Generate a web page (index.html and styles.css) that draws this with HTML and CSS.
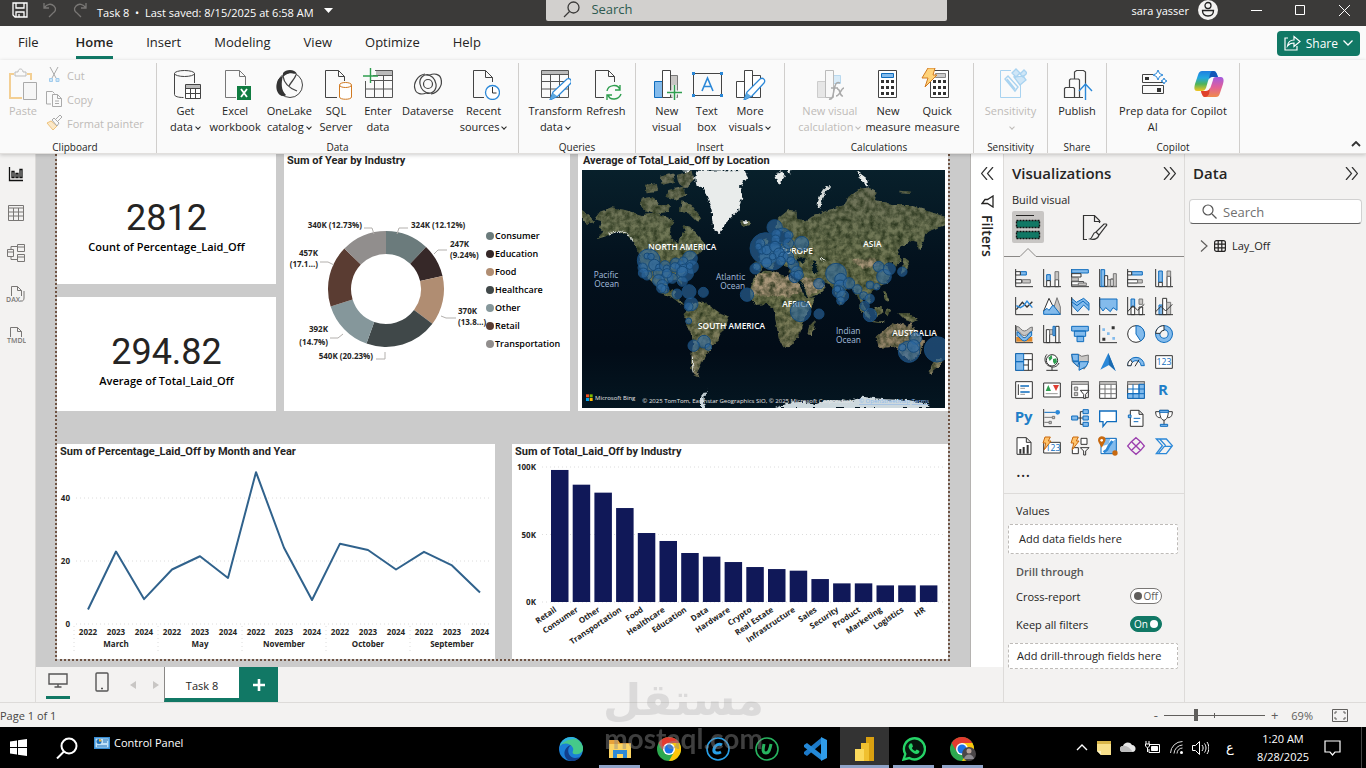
FILE: index.html
```html
<!DOCTYPE html>
<html lang="en">
<head>
  <meta charset="UTF-8" />
  <meta name="viewport" content="width=device-width, initial-scale=1.0"/>
  <title>Task 8</title>
  <link rel="stylesheet" href="styles.css">
</head>
<body>
  <header class="titlebar">
    <div class="title-left">
      <button class="plain" aria-label="Save"><svg width="16" height="16" viewBox="0 0 16 16" fill="none" stroke="#fff" stroke-width="1.3"><path d="M1 1h14v14H3l-2-2zM4 1v5h8V1M4 15v-5h8v5M7 12v3"/></svg></button>
      <button class="plain" aria-label="Undo"><svg width="16" height="16" viewBox="0 0 16 16" fill="none" stroke="#797775" stroke-width="1.3"><path d="M2 1v5h5M2 6c3-4 7-5 10-2s1 6-1 7l-4 4"/></svg></button>
      <button class="plain" aria-label="Redo"><svg width="16" height="16" viewBox="0 0 16 16" fill="none" stroke="#797775" stroke-width="1.3"><path d="M14 1v5H9M14 6c-3-4-7-5-10-2s-1 6 1 7l4 4"/></svg></button>
      <span class="doc-name">Task 8 &nbsp;•&nbsp; Last saved: 8/15/2025 at 6:58 AM</span>
      <svg width="9" height="5" viewBox="0 0 9 5"><path d="M0 0h9L4.500 5z" fill="#fff"/></svg>
    </div>
    <label class="title-search">
      <svg width="17" height="17" viewBox="0 0 17 17" fill="none" stroke="#3b3a39" stroke-width="1.300"><circle cx="10.500" cy="6.500" r="5.500"/><path d="M6.500 10.500L1 16"/></svg>
      <input type="text" placeholder="Search" aria-label="Search">
    </label>
    <div class="title-right">
      <span>sara yasser</span>
      <svg class="avatar" width="20" height="20" viewBox="0 0 20 20"><circle cx="10" cy="10" r="10" fill="#f3f2f1"/><circle cx="10" cy="5.500" r="3" fill="none" stroke="#222" stroke-width="1.300"/><path d="M4.500 10.500h11c0 3.500-2 5.500-5.500 5.500s-5.500-2-5.500-5.500z" fill="none" stroke="#222" stroke-width="1.300"/></svg>
      <button class="plain win" aria-label="Minimize"><svg width="11" height="11" viewBox="0 0 11 11"><path d="M0 5.500h11" stroke="#fff"/></svg></button>
      <button class="plain win" aria-label="Maximize"><svg width="11" height="11" viewBox="0 0 11 11"><path d="M.5.5h9v9h-9z" fill="none" stroke="#fff"/></svg></button>
      <button class="plain win" aria-label="Close"><svg width="11" height="11" viewBox="0 0 11 11"><path d="M0 0l11 11M11 0L0 11" stroke="#fff"/></svg></button>
    </div>
  </header>

  <nav class="tabs">
    <a href="#">File</a>
    <a href="#" class="active">Home</a>
    <a href="#">Insert</a>
    <a href="#">Modeling</a>
    <a href="#">View</a>
    <a href="#">Optimize</a>
    <a href="#">Help</a>
    <button class="share">
      <svg width="17" height="16" viewBox="0 0 17 16" fill="none" stroke="#fff" stroke-width="1.200"><path d="M4 3H1v12h12v-4M3.500 11C4 7 6 5 10 5V1.500l6 5-6 5V8C7 8 5 9 3.500 11z"/></svg>
      Share
      <svg width="10" height="6" viewBox="0 0 10 6" fill="none" stroke="#fff" stroke-width="1.300"><path d="M.5.5L5 5 9.500.5"/></svg>
    </button>
  </nav>

  <section class="ribbon">
    <div class="group g-clipboard">
      <div class="tools">
        <button class="tool off">
          <svg width="32" height="32" viewBox="0 0 32 32" fill="none"><path d="M7 6H3v24h12" stroke="#f3cf94" stroke-width="2"/><path d="M20 6h4v6" stroke="#f3cf94" stroke-width="2"/><path d="M8 8V4h3c0-4 5-4 5 0h3v4z" stroke="#bbb"/><path d="M16.500 14.500h13v17h-13z" fill="#f6f6f6" stroke="#aaa"/></svg>
          Paste
        </button>
        <div class="clip-list">
          <button class="mini"><svg width="16" height="16" viewBox="0 0 16 16" fill="none"><path d="M4 0l6 11M12 0L6 11" stroke="#aaa"/><path d="M3.500 11.500h3v3h-3zM10 11.500h3v3h-3z" stroke="#a0cbec" fill="#cfe6f7"/></svg>Cut</button>
          <button class="mini"><svg width="16" height="16" viewBox="0 0 16 16" fill="none" stroke="#aaa"><path d="M5 13H.5V.5h6l2 2"/><path d="M6.500 3.500h5l4 4v8h-9zM11.500 3.500v4h4M9 10h4M9 12.500h4"/></svg>Copy</button>
          <button class="mini"><svg width="16" height="16" viewBox="0 0 16 16" fill="none"><path d="M1 8l4-2 6 5-4 4z" fill="#fbe8c8" stroke="#eec27a"/><path d="M6 5l2-2 5 5-2 3zM10 4l4-4 2 2-4 4" stroke="#aaa"/></svg>Format painter</button>
        </div>
      </div>
      <div class="group-name">Clipboard</div>
    </div>

    <div class="group g-data">
      <div class="tools">
        <button class="tool">
          <svg width="32" height="32" viewBox="0 0 32 32" fill="none" stroke="#444"><ellipse cx="14.500" cy="5.500" rx="10" ry="3"/><path d="M4.500 5.500v21c0 2 4 3 9 3M24.500 5.500V15"/><path d="M15.500 16.500h15v14h-15z" fill="#fff"/><path d="M16 17h14v3H16z" fill="#bbb" stroke="none"/><path d="M15.500 20.500h15M15.500 25.500h15M20.500 20v11M25.500 20v11"/></svg>
          Get<br>data<i class="chev"></i>
        </button>
        <button class="tool">
          <svg width="32" height="32" viewBox="0 0 32 32" fill="none"><path d="M17 29.500H6.500v-27h14l6 6V17M20.500 2.500v6h6" stroke="#777"/><path d="M18 18h14v14H18z" fill="#107c41"/><path d="M22 21l6 8M28 21l-6 8" stroke="#fff" stroke-width="1.800"/></svg>
          Excel<br>workbook
        </button>
        <button class="tool">
          <svg width="32" height="32" viewBox="0 0 32 32" fill="none"><circle cx="17" cy="17" r="12.500" stroke="#444"/><path d="M10 5c3-4 12-4 14 1-5-2-10-1-14 3z" fill="#333"/><path d="M10 8c-7 2-9 14-3 19 3 2 5 1 6 0C8 22 8 15 10 8z" fill="#333"/><path d="M10 8c1 8 6 12 14 15M16 18c2-4 5-6 7-11" stroke="#444" stroke-width="1.300"/></svg>
          OneLake<br>catalog<i class="chev"></i>
        </button>
        <button class="tool">
          <svg width="32" height="32" viewBox="0 0 32 32" fill="none"><path d="M17 29.500H5.500v-27h13l6 6V13M18.500 2.500v6h6" stroke="#444"/><path d="M19.500 17v12c0 3 12 3 12 0V17" stroke="#d17a22" fill="#fff"/><ellipse cx="25.500" cy="17" rx="6" ry="2.500" stroke="#d17a22" fill="#fff"/></svg>
          SQL<br>Server
        </button>
        <button class="tool">
          <svg width="32" height="32" viewBox="0 0 32 32" fill="none"><path d="M14 3h16v4H14z" fill="#bbb"/><path d="M13 2.500h17.500v27h-27V13M9 12.500h21.500M4 21h26M12.500 13v16M21.500 7v22M11 7.500h19" stroke="#555"/><path d="M1 8h15M8.500 0v15" stroke="#2f9e4f" stroke-width="1.400"/></svg>
          Enter<br>data
        </button>
        <button class="tool">
          <svg width="32" height="32" viewBox="0 0 32 32" fill="none" stroke="#444" stroke-width="1.200"><path d="M13 6C6 7 1 15 3 21c1 5 7 6 11 4"/><path d="M19 26c7-1 12-9 10-15-1-5-7-6-11-4"/><circle cx="16" cy="16" r="4.500"/><path d="M18 7c-6-2-11 3-10 9 1 5 4 9 10 9M14 25c6 2 11-3 10-9-1-5-4-9-10-9"/></svg>
          Dataverse
        </button>
        <button class="tool">
          <svg width="32" height="32" viewBox="0 0 32 32" fill="none"><path d="M16 29.500H5.500v-27h12l7 7V14M17.500 2.500v7h7" stroke="#444"/><circle cx="24.500" cy="24.500" r="7" fill="#fff" stroke="#2b88d8" stroke-width="1.300"/><path d="M24.500 19v6h4" stroke="#333"/></svg>
          Recent<br>sources<i class="chev"></i>
        </button>
      </div>
      <div class="group-name">Data</div>
    </div>

    <div class="group g-queries">
      <div class="tools">
        <button class="tool">
          <svg width="32" height="32" viewBox="0 0 32 32" fill="none"><path d="M3 3h27v3H3z" fill="#bbb"/><path d="M2.500 2.500h27v27h-27zM2.500 6.500h27M2.500 13.500h27M2.500 21h27M11.500 7v22M20.500 7v22" stroke="#555"/><path d="M11 32l3-8 14-13c3-1 5 1 4 4L19 28z" fill="#fff" stroke="#2b88d8" stroke-width="1.300"/><path d="M11 32l3-7 4 3z" fill="#5ba7e0"/></svg>
          Transform<br>data<i class="chev"></i>
        </button>
        <button class="tool">
          <svg width="32" height="32" viewBox="0 0 32 32" fill="none"><path d="M14 29.500H5.500v-27h13l6 6V14M18.500 2.500v6h6" stroke="#444"/><path d="M17 23c1-6 11-8 13-1M30 17v5h-5M31 26c-2 6-11 7-13 1M17 32v-5h5" stroke="#2f9e4f" stroke-width="1.400"/></svg>
          Refresh
        </button>
      </div>
      <div class="group-name">Queries</div>
    </div>

    <div class="group g-insert">
      <div class="tools">
        <button class="tool">
          <svg width="32" height="32" viewBox="0 0 32 32" fill="none"><path d="M3.500 13.500h8v16h-8z" fill="#83bbec" stroke="#0f6cbd"/><path d="M19.500 7.500h7v22h-7z" fill="#c8c6c4" stroke="#777"/><path d="M11.500 2.500h8v27h-8z" fill="#fff" stroke="#444"/><path d="M16 24.500h15M23.500 17v15" stroke="#fafafa" stroke-width="4"/><path d="M16 24.500h15M23.500 17v15" stroke="#2f9e4f" stroke-width="1.500"/></svg>
          New<br>visual
        </button>
        <button class="tool">
          <svg width="32" height="32" viewBox="0 0 32 32" fill="none"><path d="M2.500 5.500h28v22h-28z" stroke="#444"/><path d="M11 23l5.500-13L22 23M13 18.500h7" stroke="#2b88d8" stroke-width="1.600"/><path d="M1 4h3v3H1zM29 4h3v3h-3zM1 26h3v3H1zM29 26h3v3h-3z" fill="#2b88d8"/></svg>
          Text<br>box
        </button>
        <button class="tool">
          <svg width="32" height="32" viewBox="0 0 32 32" fill="none"><path d="M2.500 13.500h8v16h-8zM18.500 7.500h8v22h-8zM10.500 2.500h8v27h-8z" fill="#fff" stroke="#444"/><path d="M10 32l3-8 13-13c3-2 6 1 4 4L18 28z" fill="#fff" stroke="#2b88d8" stroke-width="1.300"/><path d="M10 32l3-7 4 3z" fill="#5ba7e0"/></svg>
          More<br>visuals<i class="chev"></i>
        </button>
      </div>
      <div class="group-name">Insert</div>
    </div>

    <div class="group g-calc">
      <div class="tools">
        <button class="tool off">
          <svg width="32" height="32" viewBox="0 0 32 32" fill="none"><path d="M3.500 13.500h8v16h-8z" fill="#e6e6e6" stroke="#ccc"/><path d="M19.500 7.500h7v8h-7z" fill="#d8ebf8" stroke="#b9d9ef"/><path d="M11.500 2.500h8v27h-8z" fill="#f8f8f8" stroke="#bbb"/><path d="M15 31c4 1 4-4 5-9s2-9 6-7M17 20h7M23 21c4-1 2 8 6 7M30 20c-3 0-4 8-8 8" stroke="#aaa" stroke-width="1.500"/></svg>
          New visual<br>calculation<i class="chev"></i>
        </button>
        <button class="tool">
          <svg width="32" height="32" viewBox="0 0 32 32" fill="none"><path d="M6.500 2.500h18v27h-18z" fill="#fff" stroke="#444"/><path d="M9.500 5.500h12v4h-12z" fill="#83bbec" stroke="#0f6cbd"/><path d="M9 13.500h14M9 19.500h14M9 25.500h14" stroke="#333" stroke-width="3" stroke-dasharray="3 2"/></svg>
          New<br>measure
        </button>
        <button class="tool">
          <svg width="32" height="32" viewBox="0 0 32 32" fill="none"><path d="M9.500 2.500h18v27h-18z" fill="#fff" stroke="#444"/><path d="M14.500 5.500h10v4h-10z" fill="#ccc" stroke="#888"/><path d="M12 13.500h14M12 19.500h14M12 25.500h14" stroke="#333" stroke-width="3" stroke-dasharray="3 2"/><path d="M7 0h7l-2 7h4L4 19l3-9H1z" fill="#ffd37a" stroke="#d17a22"/></svg>
          Quick<br>measure
        </button>
      </div>
      <div class="group-name">Calculations</div>
    </div>

    <div class="group g-sens">
      <div class="tools">
        <button class="tool off">
          <svg width="32" height="32" viewBox="0 0 32 32" fill="none" stroke="#a9d3f0"><path d="M16 2.500H5.500v27h20V17"/><path d="M10 11l3-3 10 11-3 4zM12 11l8 10" stroke-width="1.400"/><path d="M17 5l4-4 4 4-4 4zM25 6l4-4 3 3-4 4zM19 9l9-1 3 4-6 5z" fill="#cfe6f7" stroke-width="1.300"/></svg>
          Sensitivity<br><i class="chev"></i>
        </button>
      </div>
      <div class="group-name">Sensitivity</div>
    </div>

    <div class="group g-share">
      <div class="tools">
        <button class="tool">
          <svg width="32" height="32" viewBox="0 0 32 32" fill="none"><path d="M22 29.500H3.500v-9l1-1h8l1 1v9M8.500 19v-7l1-1h8l1 1v17M13.500 11V4l2-1.500h7L24.500 4v12" stroke="#444" stroke-width="1.200"/><path d="M24.500 32V17M18 23l6.500-7 6.500 7" stroke="#2b88d8" stroke-width="1.400"/></svg>
          Publish
        </button>
      </div>
      <div class="group-name">Share</div>
    </div>

    <div class="group g-copilot">
      <div class="tools">
        <button class="tool">
          <svg width="32" height="32" viewBox="0 0 32 32" fill="none"><path d="M16 6.500H5.500v8h21v-2M5.500 17.500h21v8h-21z" stroke="#444"/><path d="M8 9h4v3H8zM20 20h4v4h-4z" fill="#333"/><path d="M21 2l1.500 3.500L26 7l-3.500 1.500L21 12l-1.500-3.500L16 7l3.500-1.500zM27 10l1 2 2 1-2 1-1 2-1-2-2-1 2-1z" fill="#fff" stroke="#2b88d8"/></svg>
          Prep data for<br>AI
        </button>
        <button class="tool">
          <svg width="32" height="32" viewBox="0 0 32 32">
            <defs>
              <linearGradient id="cp1" x1="0" y1="0" x2="0" y2="1"><stop offset="0" stop-color="#1f7fe0"/><stop offset=".35" stop-color="#22a7e0"/><stop offset=".65" stop-color="#4fb35a"/><stop offset="1" stop-color="#f2c521"/></linearGradient>
              <linearGradient id="cp2" x1="0" y1="0" x2="0" y2="1"><stop offset="0" stop-color="#a35be0"/><stop offset=".5" stop-color="#e0609a"/><stop offset="1" stop-color="#f08a4a"/></linearGradient>
            </defs>
            <path d="M9 3h12c2 0 3 3 4 6h-6c-2 0-3 1-4 4l-2 7c-1 2-2 3-4 3H4c-3 0-3-3-2-7L5 7c1-3 2-4 4-4z" fill="url(#cp1)"/>
            <path d="M20 3c3 0 4 3 5 6h-6c-2 0-2 1-3 2l1-5c1-2 1-3 3-3z" fill="#1257b8"/>
            <path d="M23 29H12c-2 0-3-2-4-6h5c3 0 4-2 5-5l2-6c0-2 1-3 3-3h5c3 0 3 4 2 7l-3 9c-1 3-2 4-4 4z" fill="url(#cp2)"/>
            <path d="M8 23h5c2 0 3-1 4-3l-1 6c-1 2-2 3-4 3s-3-2-4-6z" fill="#e0402a"/>
          </svg>
          Copilot
        </button>
      </div>
      <div class="group-name">Copilot</div>
    </div>
    <button class="plain collapse" aria-label="Collapse ribbon"><svg width="10" height="6" viewBox="0 0 10 6" fill="none" stroke="#333" stroke-width="1.800"><path d="M1 5l4-4 4 4"/></svg></button>
  </section>

  <main>
    <nav class="views">
      <button class="plain" aria-label="Report view"><svg width="16" height="16" viewBox="0 0 16 16" fill="none" stroke="#111" stroke-width="1.300"><path d="M1.500 1v13.500H15M4 5.500h2v6H4zM8 7.500h2v4H8zM12 3.500h2v8h-2z"/></svg></button>
      <button class="plain" aria-label="Table view"><svg width="16" height="16" viewBox="0 0 16 16" fill="none" stroke="#797775"><path d="M.5.5h15v15H.5zM.5 3h15M.5 7h15M.5 11h15M5.500 3v12M10.500 3v12"/></svg></button>
      <button class="plain" aria-label="Model view"><svg width="18" height="18" viewBox="0 0 18 18" fill="none" stroke="#797775"><path d="M.5 5.500h6v7h-6zM.5 8h6M10.500.5h7v7h-7zM10.500 3h7M10.500 10.500h7v7h-7zM10.500 13h7M4 5.500V2.500h6.500M4 12.500v3h6.500"/></svg></button>
      <button class="plain" aria-label="DAX query view"><svg width="20" height="18" viewBox="0 0 20 18" fill="none" stroke="#797775"><path d="M5.500 11V1.500h6l4 4V11M11.500 1.500v4h4M14 16h2c1 0 2-1 2-3V6"/><text x="0" y="17" class="nav-text">DAX</text></svg></button>
      <button class="plain" aria-label="TMDL view"><svg width="20" height="18" viewBox="0 0 20 18" fill="none" stroke="#797775"><path d="M4.500 11V1.500h7l4 4V11M11.500 1.500v4h4"/><text x="1" y="17" class="nav-text">TMDL</text></svg></button>
    </nav>

    <section class="workspace">
      <div class="work-top">
        <div class="canvas">
          <div class="page">
            <div class="row row-top">
              <div class="cards">
                <article class="tile card card-first">
                  <strong>2812</strong>
                  <span>Count of Percentage_Laid_Off</span>
                </article>
                <article class="tile card">
                  <strong>294.82</strong>
                  <span>Average of Total_Laid_Off</span>
                </article>
              </div>

              <article class="tile donut">
                <h3>Sum of Year by Industry</h3>
                <svg id="donut" viewBox="0 0 286 243"></svg>
              </article>

              <article class="tile map">
                <h3>Average of Total_Laid_Off by Location</h3>
                <svg id="map" viewBox="21 60 1089 714">
                  <defs>
                    <filter id="terrain" x="0" y="0" width="100%" height="100%" color-interpolation-filters="sRGB">
                      <feTurbulence type="fractalNoise" baseFrequency="0.06" numOctaves="4" seed="4" result="n"/>
                      <feDisplacementMap in="SourceGraphic" in2="n" scale="12" xChannelSelector="R" yChannelSelector="G" result="d"/>
                      <feColorMatrix in="n" type="matrix" values="0 0 0 0 .12  0 0 0 0 .17  0 0 0 0 .08  1.600 0 0 0 -.5" result="dark"/>
                      <feComposite in="dark" in2="d" operator="in" result="t"/>
                      <feMerge><feMergeNode in="d"/><feMergeNode in="t"/></feMerge>
                    </filter>
                    <filter id="coast">
                      <feTurbulence type="fractalNoise" baseFrequency="0.1" numOctaves="3" seed="9" result="n"/>
                      <feDisplacementMap in="SourceGraphic" in2="n" scale="14" xChannelSelector="R" yChannelSelector="G"/>
                    </filter>
                    <linearGradient id="sea" x1="0" y1="0" x2="0" y2="1"><stop offset="0" stop-color="#08202b"/><stop offset=".4" stop-color="#03111d"/><stop offset=".75" stop-color="#020c17"/><stop offset="1" stop-color="#041621"/></linearGradient>
                    <linearGradient id="land" x1="0" y1="60" x2="0" y2="700" gradientUnits="userSpaceOnUse"><stop offset="0" stop-color="#6e705c"/><stop offset=".3" stop-color="#6f7655"/><stop offset=".6" stop-color="#717650"/><stop offset="1" stop-color="#8c8468"/></linearGradient>
                  </defs>
                  <rect x="21" y="60" width="1089" height="714" fill="url(#sea)"/>
                  <g filter="url(#terrain)" fill="url(#land)">
                    <path d="M75 185L110 172 150 180 200 195 250 190 300 212 285 240 290 265 310 282 315 260 332 245 325 225 345 230 375 265 392 285 380 305 355 320 345 335 330 365 318 385 322 405 312 395 300 388 275 395 272 410 280 425 300 420 297 438 315 450 328 465 315 460 290 442 265 432 240 405 220 385 200 355 195 325 190 300 170 270 150 250 125 245 95 258 65 268 85 245 72 230 78 210 60 205z"/>
                    <path d="M200 145L235 140 250 165 285 165 280 185 240 192 215 185 195 165zM210 105L245 100 250 125 215 130zM255 80L295 70 300 95 260 105zM280 120L325 110 335 135 300 150 275 140zM305 75L350 62 355 90 330 115 310 100zM320 150L350 165 380 205 365 215 340 190 315 185zM21 180L40 195 60 215 40 222 21 215z"/>
                    <path d="M345 465L365 455 385 455 415 475 430 485 462 500 455 522 440 547 430 570 410 590 400 610 385 630 375 650 365 670 375 684 358 675 348 650 350 610 355 580 350 555 335 525 328 505 330 490z"/>
                    <path d="M535 355L540 335 560 335 552 318 575 305 590 295 605 285 625 280 645 275 650 262 640 250 615 240 600 235 610 205 640 180 665 182 665 200 690 215 710 200 735 190 760 180 790 170 810 165 820 140 850 118 880 112 905 125 900 150 950 165 1000 165 1050 180 1110 200 1110 225 1070 240 1052 250 1045 275 1032 300 1025 275 1005 270 985 285 968 300 980 330 963 350 950 335 935 345 945 375 935 400 905 415 890 425 888 445 880 465 866 440 860 455 878 485 865 478 850 440 835 420 815 415 810 440 797 467 780 430 770 405 745 395 740 400 752 412 735 430 700 445 690 425 672 395 668 372 640 370 648 355 620 345 605 325 600 340 590 355 570 350 555 362zM560 270L575 265 582 298 560 300zM495 215L520 212 525 224 505 230z"/>
                    <path d="M985 320L1005 335 995 360 978 372 982 350zM855 465L890 500 880 505 852 478zM895 475L920 470 922 490 905 498zM890 510L930 515 925 520 890 516zM970 490L1000 490 1030 510 1015 515 985 505zM935 475L948 480 940 500 930 490zM925 425L935 430 940 455 930 450z"/>
                    <path d="M905 560L935 535 955 520 970 525 985 518 995 535 1005 515 1020 540 1047 575 1037 610 1010 635 985 620 960 590 910 594z" fill="#928367"/>
                    <path d="M1085 625L1105 630 1090 650 1065 672 1060 665zM973 122L1012 125 1005 132 975 130z"/>
                    <path d="M545 370L570 362 600 365 610 378 640 385 665 388 680 420 695 445 720 442 710 470 690 495 683 530 670 560 650 585 625 592 612 565 605 530 600 500 595 475 575 462 540 465 527 445 525 420 535 390zM715 515L722 513 718 533 708 558 697 556 702 530z"/>
                    <path d="M545 372L600 367 665 390 683 425 640 440 535 435 530 415zM675 385L735 385 748 410 700 440zM830 330L900 325 920 345 860 355z" fill="#a79578"/>
                  </g>
                  <g filter="url(#coast)">
                    <path d="M662 325q15-8 30 2l-5 12q-15-5-25 0zM712 330l12 5-2 12 8 22-12 4-8-22z" fill="#061722"/>
                    <path d="M668 388l6-2 25 52-6 4z" fill="#061722"/>
                    <path d="M365 62L510 60 517 80 495 110 502 140 490 180 470 200 450 222 435 252 420 245 412 215 410 180 400 150 388 120 365 105 360 85zM600 75L620 62 630 78 622 90 612 105 605 90zM635 64L650 62 645 72zM320 62L350 60 335 68zM845 62L875 85 880 110 862 95zM500 214l18 0 2 6-12 3z" fill="#e9eceb"/>
                    <path d="M765 112Q735 125 732 175" fill="none" stroke="#d6dad8" stroke-width="10"/>
                    <path d="M100 252l30-8 25 5 20 25M352 620l2 50M735 325l15 5" fill="none" stroke="#dfe3e0" stroke-width="3"/>
                    <path d="M375 774L375 745 400 715 385 740 390 774zM600 774L640 758 690 755 715 765 760 750 830 752 860 740 930 748 1000 750 1060 762 1065 774z" fill="#cdd8dd"/>
                  </g>
                  <g class="ocean-names">
                    <text x="56" y="384">Pacific</text><text x="58" y="410">Ocean</text>
                    <text x="423" y="390">Atlantic</text><text x="436" y="416">Ocean</text>
                    <text x="783" y="552">Indian</text><text x="783" y="580">Ocean</text>
                  </g>
                  <g class="land-names">
                    <text x="220" y="299">NORTH AMERICA</text>
                    <text x="369" y="537">SOUTH AMERICA</text>
                    <text x="622" y="470">AFRICA</text>
                    <text x="616" y="311">EUROPE</text>
                    <text x="865" y="291">ASIA</text>
                    <text x="952" y="557">AUSTRALIA</text>
                  </g>
                  <g id="bubbles"></g>
                  <path d="M33 733h9v9h-9z" fill="#f25022"/><path d="M44 733h9v9h-9z" fill="#7fba00"/><path d="M33 744h9v9h-9z" fill="#00a4ef"/><path d="M44 744h9v9h-9z" fill="#ffb900"/>
                  <g class="credits">
                    <text x="60" y="750">Microsoft Bing</text>
                    <text x="202" y="759">© 2025 TomTom, Earthstar Geographics SIO, © 2025 Microsoft Corporation,</text>
                    <a href="#"><text x="852" y="759">© OpenStreetMap</text></a>
                    <a href="#"><text x="1010" y="759">Terms</text></a>
                  </g>
                </svg>
              </article>
            </div>

            <div class="row row-bottom">
              <article class="tile chart">
                <h3>Sum of Percentage_Laid_Off by Month and Year</h3>
                <svg id="line" viewBox="0 0 438 200"></svg>
              </article>
              <article class="tile chart">
                <h3>Sum of Total_Laid_Off by Industry</h3>
                <svg id="bars" viewBox="0 0 436 200"></svg>
              </article>
            </div>
          </div>
        </div>

        <aside class="filters">
          <button class="plain" aria-label="Expand filters"><svg width="13" height="13" viewBox="0 0 13 13" fill="none" stroke="#333" stroke-width="1.200"><path d="M6 0L.5 6.500 6 13M12 0L6.500 6.500 12 13"/></svg></button>
          <svg width="13" height="13" viewBox="0 0 13 13" fill="none" stroke="#252423" stroke-width="1.300"><path d="M12 1v11L6.500 8.500H1l3-4h2.500z"/></svg>
          <h2>Filters</h2>
        </aside>
      </div>

      <div class="page-tabs">
        <button class="plain device on" aria-label="Desktop layout"><svg width="20" height="15" viewBox="0 0 20 15" fill="none" stroke="#555" stroke-width="1.400"><path d="M1 1h18v10H1zM10 11v3M6.500 14h7"/></svg></button>
        <button class="plain device" aria-label="Mobile layout"><svg width="14" height="20" viewBox="0 0 14 20" fill="none" stroke="#555" stroke-width="1.400"><rect x="1" y="1" width="12" height="18" rx="1"/><path d="M6 16.500h2"/></svg></button>
        <button class="plain arrow" aria-label="Previous page"><svg width="6" height="8" viewBox="0 0 6 8"><path d="M6 0v8L0 4z" fill="#c8c6c4"/></svg></button>
        <button class="plain arrow" aria-label="Next page"><svg width="6" height="8" viewBox="0 0 6 8"><path d="M0 0v8l6-4z" fill="#c8c6c4"/></svg></button>
        <button class="page-tab">Task 8</button>
        <button class="add-page" aria-label="New page"><svg width="12" height="12" viewBox="0 0 12 12"><path d="M0 6h12M6 0v12" stroke="#fff" stroke-width="2.600"/></svg></button>
      </div>
    </section>

    <aside class="pane viz">
      <header>
        <h2>Visualizations</h2>
        <button class="plain" aria-label="Collapse"><svg width="13" height="13" viewBox="0 0 13 13" fill="none" stroke="#333" stroke-width="1.200"><path d="M1 0l5.500 6.500L1 13M7 0l5.500 6.500L7 13"/></svg></button>
      </header>
      <p class="build">Build visual</p>
      <div class="modes">
        <button class="mode on" aria-label="Build visual"><svg width="26" height="26" viewBox="0 0 26 26"><path d="M1 1.500h18" stroke="#252423"/><path d="M1.500 6.500h23v7h-23zM1.500 17.500h23v7h-23z" fill="#117865" stroke="#111" stroke-width="1.400" stroke-dasharray="2 1"/></svg></button>
        <button class="mode" aria-label="Format visual"><svg width="26" height="26" viewBox="0 0 26 26" fill="none" stroke="#333" stroke-width="1.200"><path d="M5 25.500H1.500v-24h11l5 5V9M12.500 1.500v6h6"/><path d="M24 10c1 0 1 1 0 2l-7 9-3-3 8-8zM14 18l3 3c-1 4-5 5-9 4 3-1 2-6 6-7z"/></svg></button>
      </div>
      <svg class="notch" width="100%" height="9"><path d="M0 8.500h16l8-8 8 8h400" fill="none" stroke="#8a8886"/></svg>
      <div class="visual-grid">
        <button class="plain" aria-label="Stacked bar chart"><svg viewBox="0 0 54 54"><path class="ax" d="M2 0v53h52"/><path class="bl" d="M16 8h18v10H16z"/><path class="wh" d="M2 8h14v10H2zM2 32h18v10H2z"/><path class="gr" d="M22 32h24v10H22z"/></svg></button>
        <button class="plain" aria-label="Stacked column chart"><svg viewBox="0 0 54 54"><path class="ax" d="M2 0v53h52"/><path class="bl" d="M11 17h11v18H11z"/><path class="wh" d="M11 35h11v18H11zM36 32h11v21H36z"/><path class="gr" d="M36 8h11v24H36z"/></svg></button>
        <button class="plain" aria-label="Clustered bar chart"><svg viewBox="0 0 54 54"><path class="ax" d="M2 0v53h52"/><path class="bl" d="M2 2h50v10H2z"/><path class="wh" d="M2 14h28v10H2zM2 38h36v10H2z"/><path class="gr" d="M2 26h20v10H2zM22 42h24v8H22z"/></svg></button>
        <button class="plain" aria-label="Clustered column chart"><svg viewBox="0 0 54 54"><path class="ax" d="M2 0v53h52"/><path class="bl" d="M6 2h11v50H6z"/><path class="wh" d="M17 20h9v32h-9zM35 30h8v22h-8z"/><path class="gr" d="M26 32h9v20h-9zM43 14h9v38h-9z"/></svg></button>
        <button class="plain" aria-label="100% stacked bar"><svg viewBox="0 0 54 54"><path class="ax" d="M2 0v53h52"/><path class="bl" d="M14 8h32v10H14z"/><path class="wh" d="M2 8h12v10H2zM2 32h30v10H2z"/><path class="gr" d="M32 32h14v10H32z"/></svg></button>
        <button class="plain" aria-label="100% stacked column"><svg viewBox="0 0 54 54"><path class="ax" d="M2 0v53h52"/><path class="bl" d="M11 6h11v34H11z"/><path class="wh" d="M11 40h11v13H11zM36 22h11v31H36z"/><path class="gr" d="M36 6h11v16H36z"/></svg></button>

        <button class="plain" aria-label="Line chart"><svg viewBox="0 0 54 54"><path class="ax" d="M2 0v53h52"/><path d="M4 38l18-22 14 14 16-16" fill="none" stroke="#333" stroke-width="4"/><path d="M4 26l12 6 10-6 10-14 16 20" fill="none" stroke="#2b88d8" stroke-width="4"/></svg></button>
        <button class="plain" aria-label="Area chart"><svg viewBox="0 0 54 54"><path class="gr" d="M26 52L42 2l10 28v22z"/><path class="wh" d="M2 42L18 4l18 36-10 12z"/><path class="bl" d="M2 52V42l10-8 6 6 12-16 22 28z"/></svg></button>
        <button class="plain" aria-label="Stacked area chart"><svg viewBox="0 0 54 54"><path class="bl" d="M2 4l14 12L38 4l16 14v22L38 24 20 44 2 24z"/><path class="ax" d="M2 0v53h52"/><path d="M2 14l16 12 18-14 16 14" fill="none" stroke="#0f6cbd" stroke-width="3"/></svg></button>
        <button class="plain" aria-label="100% area chart"><svg viewBox="0 0 54 54"><path class="bl" d="M2 6h52v34l-12-8-8 12-14-12-8 10-10-14z"/><path class="ax" d="M2 0v53h52"/></svg></button>
        <button class="plain" aria-label="Line and stacked column"><svg viewBox="0 0 54 54"><path class="bl" d="M12 6h11v24H12z"/><path class="wh" d="M12 30h11v23H12zM36 30h11v23H36z"/><path class="gr" d="M36 6h11v16H36z"/><path class="ax" d="M2 0v53h52M2 44l16-18 14 14 20-18"/></svg></button>
        <button class="plain" aria-label="Line and clustered column"><svg viewBox="0 0 54 54"><path class="bl" d="M12 24h11v29H12z"/><path class="wh" d="M23 4h12v49H23z"/><path class="gr" d="M35 16h12v37H35z"/><path class="ax" d="M2 0v53h52M2 44l16-16 14 14 20-20"/></svg></button>

        <button class="plain" aria-label="Ribbon chart"><svg viewBox="0 0 54 54"><path d="M4 36h48v14H4z" fill="#e08a2c"/><path class="gr" d="M4 4c12 0 14 14 24 14S42 6 52 6v12c-10 0-12 14-24 14S16 16 4 16z"/><path class="bl" d="M6 20c10 2 12 18 22 18s12-16 22-18v12c-8 2-12 16-22 16S14 34 6 32z"/><path class="ax" d="M2 0v53h52"/></svg></button>
        <button class="plain" aria-label="Waterfall chart"><svg viewBox="0 0 54 54"><path class="wh" d="M10 14h10v39H10zM38 4h10v49H38z"/><path class="gr" d="M20 14h10v14H20z"/><path class="bl" d="M30 4h6v28h-6z"/><path class="ax" d="M2 0v53h52"/></svg></button>
        <button class="plain" aria-label="Funnel chart"><svg viewBox="0 0 54 54"><path class="bl" d="M2 4h50v14H2zM10 18h34v16H10zM18 34h20v16H18z"/></svg></button>
        <button class="plain" aria-label="Scatter chart"><svg viewBox="0 0 54 54"><path class="ax" d="M2 0v53h52"/><path d="M10 10h8v8h-8zM24 22h8v8h-8zM40 36h8v8h-8z" fill="#83bbec"/><path d="M38 4h9v9h-9zM10 38h9v9h-9z" fill="#333"/></svg></button>
        <button class="plain" aria-label="Pie chart"><svg viewBox="0 0 54 54"><circle class="wh" cx="27" cy="27" r="25"/><path class="bl" d="M27 2a25 25 0 0 1 14 46L27 27z"/></svg></button>
        <button class="plain" aria-label="Donut chart"><svg viewBox="0 0 54 54"><circle cx="27" cy="27" r="19" fill="none" stroke="#0f6cbd" stroke-width="16"/><circle cx="27" cy="27" r="19" fill="none" stroke="#83bbec" stroke-width="10"/><path class="wh" d="M27 2v14a11 11 0 0 0-11 9H2C4 10 14 2 27 2z"/></svg></button>

        <button class="plain" aria-label="Treemap"><svg viewBox="0 0 54 54"><path class="wh" d="M2 2h50v50H2z"/><path class="bl" d="M2 2h24v24H2zM2 26h24v26H2z"/><path class="ax" d="M26 20h26M40 20v32M26 36h14"/></svg></button>
        <button class="plain" aria-label="Map"><svg viewBox="0 0 54 54"><circle class="wh" cx="27" cy="22" r="17"/><path d="M16 14l10-8 2 10-8 8zM30 18l10-2 2 12-8 6-4-8z" fill="#2f9e4f"/><path class="ax" d="M12 4C2 14 4 34 20 40s24-2 28-10M27 42v10M10 52h34"/></svg></button>
        <button class="plain" aria-label="Filled map"><svg viewBox="0 0 54 54"><path class="gr" d="M2 4h20l10 6 20-4v20L40 48 20 40 4 26z"/><path class="bl" d="M2 4h20v20H6zM26 26h26l-6 14-22 12zM6 26h18l-4 14z"/></svg></button>
        <button class="plain" aria-label="Azure map"><svg viewBox="0 0 54 54"><path d="M28 0L4 50l26-14 20 18z" fill="#2b88d8"/><path d="M28 0l2 36 20 18z" fill="#1a6ab0"/></svg></button>
        <button class="plain" aria-label="Gauge"><svg viewBox="0 0 54 54"><path class="bl" d="M2 38a25 25 0 0 1 50 0H42a15 15 0 0 0-30 0z"/><path class="wh" d="M2 38c0-8 3-14 8-18l6 8c-2 2-4 6-4 10z"/><path class="ax" d="M24 40l12-20"/></svg></button>
        <button class="plain" aria-label="Card"><svg viewBox="0 0 54 54"><path class="wh" d="M2 8h50v38H2z"/><text x="27" y="36" class="num">123</text></svg></button>

        <button class="plain" aria-label="Multi-row card"><svg viewBox="0 0 54 54"><path class="wh" d="M2 2h50v50H2z"/><path class="ax" d="M10 10v32"/><path d="M16 15h26M16 33h28" stroke="#0f6cbd" stroke-width="5"/><path d="M16 22h14M16 40h14" stroke="#999" stroke-width="3"/></svg></button>
        <button class="plain" aria-label="KPI"><svg viewBox="0 0 54 54"><path class="wh" d="M2 6h50v42H2z"/><path d="M8 30l8-18 8 18z" fill="#2f9e4f"/><path d="M30 12h18l-9 18z" fill="#e03c31"/><path d="M8 38h36" stroke="#999" stroke-width="3"/></svg></button>
        <button class="plain" aria-label="Slicer"><svg viewBox="0 0 54 54"><path class="wh" d="M2 2h50v48H2z"/><path class="gr" d="M2 2h50v8H2zM10 18h10v10H10zM10 34h10v10H10z"/><path class="wh" d="M28 28h26L44 40v12h-6V40z"/></svg></button>
        <button class="plain" aria-label="Table"><svg viewBox="0 0 54 54"><path class="wh" d="M2 2h50v50H2z"/><path class="gr" d="M2 2h50v8H2z"/><path d="M2 24h50M2 38h50M18 10v42M36 10v42" stroke="#777" stroke-width="3"/></svg></button>
        <button class="plain" aria-label="Matrix"><svg viewBox="0 0 54 54"><path class="wh" d="M2 2h50v50H2z"/><path class="gr" d="M2 2h50v8H2z"/><path class="bl" d="M36 10h16v42H2V38h34z"/><path d="M2 24h50M2 38h50M18 10v42M36 10v42" stroke="#0f6cbd" stroke-width="3"/></svg></button>
        <button class="plain" aria-label="R script visual"><svg viewBox="0 0 54 54"><text x="24" y="42" class="lang">R</text></svg></button>

        <button class="plain" aria-label="Python visual"><svg viewBox="0 0 54 54"><text x="26" y="38" class="lang">Py</text></svg></button>
        <button class="plain" aria-label="Key influencers"><svg viewBox="0 0 54 54"><path class="ax" d="M2 0v53h52"/><path d="M4 10h34" stroke="#0f6cbd" stroke-width="3"/><path d="M4 25h24M4 40h16" stroke="#777" stroke-width="3"/><circle cx="44" cy="10" r="7" fill="#2b88d8"/><path class="gr" d="M28 22h7v7h-7zM18 37h7v7h-7z"/></svg></button>
        <button class="plain" aria-label="Decomposition tree"><svg viewBox="0 0 54 54"><path class="ax" d="M18 27h18M28 8v38M28 8h8M28 46h8"/><path class="bl" d="M2 21h18v12H2zM36 2h16v12H36zM36 21h16v12H36zM36 40h16v12H36z"/></svg></button>
        <button class="plain" aria-label="Q&amp;A"><svg viewBox="0 0 54 54"><path d="M2 6h50v32H24L12 52V38H2z" fill="#fff" stroke="#0f6cbd" stroke-width="4"/></svg></button>
        <button class="plain" aria-label="Smart narrative"><svg viewBox="0 0 54 54"><path class="wh" d="M10 4h26l12 12v36H10zM36 4v12h12"/><path d="M20 28h20M20 38h14" stroke="#0f6cbd" stroke-width="3"/><path class="bl" d="M4 18h8v8H4z"/></svg></button>
        <button class="plain" aria-label="Goals"><svg viewBox="0 0 54 54"><path class="wh" d="M14 4h26c0 18-4 28-13 30C18 32 14 22 14 4zM14 8H2c0 12 4 18 14 18M40 8h12c0 12-4 18-14 18"/><path class="ax" d="M27 34v14"/><path class="bl" d="M14 4h26v6H14zM16 46h22v6H16z"/></svg></button>

        <button class="plain" aria-label="Paginated report"><svg viewBox="0 0 54 54"><path class="wh" d="M6 2h28l14 14v36H6zM34 2v14h14"/><path d="M16 36v14M26 30v20M38 24v26" stroke="#333" stroke-width="6"/></svg></button>
        <button class="plain" aria-label="New card"><svg viewBox="0 0 54 54"><path class="wh" d="M2 16h50v32H2z"/><text x="30" y="42" class="num">123</text><path class="bolt" d="M6 0h16l-6 12h8L4 38l4-20H0z"/></svg></button>
        <button class="plain" aria-label="New slicer"><svg viewBox="0 0 54 54"><path class="wh" d="M30 4h18v18H30zM4 32h18v18H4z"/><path class="bolt" d="M6 0h16l-6 12h8L4 38l4-20H0z"/><path class="wh" d="M28 32h26L44 42v12h-6V42z"/></svg></button>
        <button class="plain" aria-label="ArcGIS map"><svg viewBox="0 0 54 54"><path class="bl" d="M6 4h46v46H6z"/><path d="M50 6L36 18 28 34 14 48H8V28l20-6L34 6z" fill="#fff"/><path d="M40 12L30 26 24 38 14 46" fill="none" stroke="#2b88d8" stroke-width="8"/><path d="M8-2c14 0 14 12 8 20L8 32 0 18C-6 10-2-2 8-2z" fill="#c8690f"/><circle cx="8" cy="10" r="4" fill="#fff"/><circle cx="48" cy="48" r="8" fill="#c8690f"/></svg></button>
        <button class="plain" aria-label="Power Apps"><svg viewBox="0 0 54 54" fill="none" stroke="#9b3fae" stroke-width="4"><path d="M27 2l14 12 11 13-11 13-14 12-14-12L2 27l11-13zM14 14l13 13 13-13M14 40l13-13 13 13"/></svg></button>
        <button class="plain" aria-label="Power Automate"><svg viewBox="0 0 54 54" fill="none" stroke="#2b88d8" stroke-width="4"><path d="M4 6h30l18 20-18 24H4l18-24zM14 6l18 20M28 28L10 50M28 28h24"/></svg></button>
      </div>
      <button class="plain more">...</button>

      <div class="wells">
        <p>Values</p>
        <div class="well">Add data fields here</div>
        <p class="drill">Drill through</p>
        <div class="opt">Cross-report
          <label class="switch"><input type="checkbox" aria-label="Cross-report"><span>Off</span></label>
        </div>
        <div class="opt">Keep all filters
          <label class="switch on"><span>On</span><input type="checkbox" checked aria-label="Keep all filters"></label>
        </div>
        <div class="well well-low">Add drill-through fields here</div>
      </div>
    </aside>

    <aside class="pane data">
      <header>
        <h2>Data</h2>
        <button class="plain" aria-label="Collapse"><svg width="13" height="13" viewBox="0 0 13 13" fill="none" stroke="#333" stroke-width="1.200"><path d="M1 0l5.500 6.500L1 13M7 0l5.500 6.500L7 13"/></svg></button>
      </header>
      <label class="data-search">
        <svg width="15" height="15" viewBox="0 0 15 15" fill="none" stroke="#555" stroke-width="1.200"><circle cx="6" cy="6" r="5"/><path d="M10 10l4.500 4.500"/></svg>
        <input type="text" placeholder="Search" aria-label="Search fields">
      </label>
      <button class="plain table-row">
        <svg width="8" height="12" viewBox="0 0 8 12" fill="none" stroke="#605e5c" stroke-width="1.200"><path d="M1 .5L7 6l-6 5.500"/></svg>
        <svg width="12" height="12" viewBox="0 0 12 12" fill="none" stroke="#252423" stroke-width="1.200"><rect x=".6" y=".6" width="10.800" height="10.800" rx="2"/><path d="M.6 4.200h10.800M.6 7.800h10.800M4.200.6v10.800M7.800.6v10.800"/></svg>
        Lay_Off
      </button>
    </aside>
  </main>

  <footer class="status">
    <span>Page 1 of 1</span>
    <div class="zoom">
      <button class="plain">-</button>
      <input type="range" min="10" max="200" value="69" aria-label="Zoom">
      <button class="plain">+</button>
      <span>69%</span>
      <button class="plain fit" aria-label="Fit to page"><svg width="16" height="13" viewBox="0 0 16 13" fill="none" stroke="#605e5c"><path d="M.5.5h15v12H.5zM3 5V3h2M11 3h2v2M13 8v2h-2M5 10H3V8"/></svg></button>
    </div>
  </footer>

  <div class="taskbar">
    <div class="task-left">
      <button class="plain" aria-label="Start"><svg width="17" height="17" viewBox="0 0 17 17" fill="#fff"><path d="M0 2.500l7-1V8H0zM8 1.300L17 0v8H8zM0 9h7v6.500l-7-1zM8 9h9v8l-9-1.300z"/></svg></button>
      <button class="plain" aria-label="Search"><svg width="22" height="22" viewBox="0 0 22 22" fill="none" stroke="#fff" stroke-width="2"><circle cx="13" cy="9" r="7.500"/><path d="M8 14.500L1 21.500"/></svg></button>
      <button class="plain control-panel"><svg width="16" height="12" viewBox="0 0 16 12"><path d="M0 0h16v12H0z" fill="#3a8fd6"/><path d="M1.500 1.500h13v9h-13z" fill="#bfe0f7"/><circle cx="5" cy="4.500" r="2.500" fill="#1d6fb8"/><path d="M5 2a2.500 2.500 0 0 1 2.500 2.500H5z" fill="#f4b63a"/><path d="M9 3h5M9 5h4M3 9h10" stroke="#1d6fb8"/></svg>Control Panel</button>
    </div>
    <div class="task-apps">
      <button class="app" aria-label="Edge"><svg width="24" height="24" viewBox="0 0 24 24"><circle cx="12" cy="12" r="12" fill="#1b7fd6"/><path d="M1 9C3-1 20-3 24 10c1 6-5 8-9 7-3-1 0-3-1-6C12 6 4 5 1 9z" fill="#45c98a"/><path d="M1 9C3 0 13-2 18 2c-6 0-13 1-17 7z" fill="#2fb3dc"/><path d="M12 8c-5 4-3 12 4 13 3 0 5-1 6-2-3 5-9 6-13 4-6-4-4-13 3-15z" fill="#123f8c"/></svg></button>
      <button class="app open" aria-label="File Explorer"><svg width="22" height="20" viewBox="0 0 22 20"><path d="M0 1h9l2 3h11v15H0z" fill="#e8a33a"/><path d="M0 5h22v14H0z" fill="#fcd462"/><path d="M4 11h14v8h-4v-4H8v4H4z" fill="#2f8ad8"/></svg></button>
      <button class="app" aria-label="Chrome"><svg width="24" height="24" viewBox="0 0 24 24"><circle cx="12" cy="12" r="12" fill="#2da94f"/><path d="M1.600 6A12 12 0 0 1 22.400 6H12L7 15z" fill="#e33b2e"/><path d="M22.400 6A12 12 0 0 1 12 24l5-9-5-9z" fill="#fdc60b"/><circle cx="12" cy="12" r="6" fill="#fff"/><circle cx="12" cy="12" r="4.500" fill="#1a73e8"/></svg></button>
      <button class="app" aria-label="C app"><svg width="24" height="24" viewBox="0 0 24 24" fill="none" stroke="#28a0e8"><circle cx="12" cy="12" r="11" stroke-width="1.600"/><path d="M16 8c-3-2-7 0-8 4s3 5 7 3" stroke-width="3"/></svg></button>
      <button class="app" aria-label="U app"><svg width="24" height="24" viewBox="0 0 24 24" fill="none" stroke="#27b35f"><circle cx="12" cy="12" r="11" stroke-width="1.600"/><path d="M9 7c-1 5-2 9 2 9 3 0 4-4 5-9" stroke-width="3"/></svg></button>
      <button class="app" aria-label="VS Code"><svg width="24" height="24" viewBox="0 0 24 24"><path d="M17 0l6 3v18l-6 3z" fill="#2f9be8"/><path d="M17 1v6L3 19l-3-2v-2z" fill="#1c79c8"/><path d="M17 23v-6L3 6 0 8v2z" fill="#2489d8"/></svg></button>
      <button class="app current" aria-label="Power BI"><svg width="20" height="24" viewBox="0 0 20 24"><path d="M11 0h8v24h-8z" fill="#d9a010"/><path d="M6 6h8v18H6z" fill="#f0c030"/><path d="M0 12h9v12H0z" fill="#fbd95c"/></svg></button>
      <button class="app open" aria-label="WhatsApp"><svg width="24" height="24" viewBox="0 0 24 24"><path d="M1.500 22.500l1.800-5.500a10.500 10.500 0 1 1 4 4z" fill="#06170d" stroke="#25d366" stroke-width="2.400"/><path d="M8 6.500l2 0 1 3-1.200 1.500c1 1.800 2 2.500 3.400 3l1.500-1.500 2.800 1.500c0 2-1.500 3-3 3C10.500 16.500 6.500 12 6.500 9z" fill="#25d366"/></svg></button>
      <button class="app open" aria-label="Chrome profile"><svg width="26" height="24" viewBox="0 0 26 24"><circle cx="12" cy="12" r="12" fill="#2da94f"/><path d="M1.600 6A12 12 0 0 1 22.400 6H12L7 15z" fill="#e33b2e"/><path d="M22.400 6A12 12 0 0 1 12 24l5-9-5-9z" fill="#fdc60b"/><circle cx="12" cy="12" r="6" fill="#fff"/><circle cx="12" cy="12" r="4.500" fill="#1a73e8"/><circle cx="19" cy="17" r="7" fill="#4a4648"/><circle cx="19" cy="14" r="2.500" fill="#b9a49a"/><path d="M14 22c1-6 9-6 10 0z" fill="#8d8a90"/></svg></button>
    </div>
    <div class="tray">
      <svg width="12" height="7" viewBox="0 0 12 7" fill="none" stroke="#fff" stroke-width="1.400"><path d="M1 6l5-5 5 5"/></svg>
      <svg width="14" height="14" viewBox="0 0 14 14"><path d="M0 0h14v14H4l-4-4z" fill="#f8e08a"/><path d="M0 0h14v3H0z" fill="#d9b64a"/><path d="M0 10h4v4z" fill="#fff6c8"/></svg>
      <svg width="16" height="11" viewBox="0 0 16 11"><path d="M3 10a3 3 0 0 1 0-6c1-4 7-5 9-1 4 0 5 6 1 7z" fill="#e8e8e8"/><path d="M3 4c3-1 6 1 10 6H3a3 3 0 0 1 0-6z" fill="#bdbdbd"/></svg>
      <svg width="16" height="13" viewBox="0 0 16 13" fill="none" stroke="#fff"><path d="M5 3.500h9.500v8H4V8"/><path d="M6.500 5.500h6v4h-6z" fill="#fff"/><path d="M1 0v3M4 0v3M.5 3h4v2l-2 2-2-2zM2.500 7v4"/></svg>
      <svg width="13" height="13" viewBox="0 0 13 13" fill="none" stroke="#ddd"><path d="M.5 12A12 12 0 0 1 12.500.5M4 12.500A9 9 0 0 1 12.500 4M7 12.500A6 6 0 0 1 12.500 7"/><circle cx="11.500" cy="11.500" r="1.500" fill="#fff" stroke="none"/></svg>
      <svg width="17" height="14" viewBox="0 0 17 14" fill="none" stroke="#fff"><path d="M.5 4.500h3l4-4v13l-4-4h-3zM10 4c1.500 2 1.500 4 0 6M12.500 2.500c2 3 2 6 0 9M15 1c2.500 4 2.500 8 0 12"/></svg>
      <span class="lang-switch">ع</span>
      <div class="clock">1:20 AM<br>8/28/2025</div>
      <svg width="17" height="16" viewBox="0 0 17 16" fill="none" stroke="#fff" stroke-width="1.200"><path d="M1 1h15v11h-5l-2.500 3L6 12H1z"/></svg>
    </div>
  </div>

  <div class="watermark">
    <span lang="ar">مستقل</span>
    <b>mostaql.com</b>
  </div>

  <script src="charts.js"></script>
</body>
</html>
```

FILE: styles.css
```css
* { box-sizing: border-box; }

body {
  margin: 0;
  min-height: 100vh;
  display: flex;
  flex-direction: column;
  position: relative;
  font-family: 'Open Sans', 'Noto Sans', sans-serif;
  font-size: 11px;
  color: #252423;
  background: #f3f2f1;
  overflow-x: hidden;
}

h2, h3, p { margin: 0; }
svg { display: block; flex-shrink: 0; }
button, input { font: inherit; color: inherit; }
.plain { border: 0; padding: 0; background: none; display: block; }

/* title bar */
.titlebar {
  display: flex;
  justify-content: space-between;
  height: 26px;
  background: #3b3a39;
  color: #fff;
}
.title-left {
  flex: 0 0 40%;
  display: flex;
  align-items: center;
  gap: 14px;
  padding: 0 0 6px 12px;
}
.title-left .doc-name { padding-top: 4px; margin-left: -5px; }
.title-left .doc-name + svg { margin-left: -4px; }
.title-search {
  flex: 1;
  display: flex;
  align-items: center;
  gap: 11px;
  height: 21px;
  padding: 0 0 3px 17px;
  background: #d2d0ce;
  border-radius: 0 0 2px 2px;
}
.title-search input {
  flex: 1;
  border: 0;
  padding: 0;
  background: none;
  font-size: 13px;
}
.title-search input::placeholder { color: #2d5a50; opacity: 1; }
.title-right {
  flex: 0 0 419px;
  display: flex;
  align-items: center;
  justify-content: flex-end;
  padding: 0 16px 6px 0;
}
.title-right .avatar { margin: 0 33px 0 9px; }
.win + .win { margin-left: 33px; }

/* ribbon tabs */
.tabs {
  display: flex;
  align-items: center;
  height: 34px;
  padding: 0 6px 0 8px;
  background: #fafafa;
}
.tabs a {
  margin: 0 10px;
  padding: 5px 0;
  border-bottom: 3px solid transparent;
  font-size: 13px;
  line-height: 18px;
  color: #252423;
  text-decoration: none;
}
.tabs a + a { margin-left: 23px; }
.tabs a:first-child { margin-right: 14px; }
.tabs a.active { font-weight: 600; border-color: #117865; }
.share {
  display: flex;
  align-items: center;
  gap: 5px;
  height: 25px;
  margin-left: auto;
  padding: 0 7px;
  border: 0;
  border-radius: 4px;
  background: #117865;
  color: #fff;
  font-size: 12px;
}

/* ribbon */
.ribbon {
  display: flex;
  position: relative;
  z-index: 2;
  padding-top: 3px;
  background: #fafafa;
  border-bottom: 1px solid #e1dfdd;
  box-shadow: 0 1px 4px rgba(0, 0, 0, .2);
}
.group { border-right: 1px solid #d0cecc; }
.g-clipboard { flex: 0 0 157px; }
.g-data { flex: 0 0 362px; }
.g-queries { flex: 0 0 117px; }
.g-insert { flex: 0 0 149px; }
.g-calc { flex: 0 0 189px; }
.g-sens { flex: 0 0 74px; }
.g-share { flex: 0 0 59px; }
.g-copilot { flex: 0 0 133px; }
.tools {
  display: flex;
  justify-content: center;
  gap: 4px;
  height: 72px;
}
.g-data .tools { gap: 6px; }
.tool {
  min-width: 36px;
  display: block;
  border: 0;
  padding: 5px 0 0;
  background: none;
  line-height: 16px;
  text-align: center;
  white-space: nowrap;
  align-self: flex-start;
}
.tool svg { margin: 0 auto 3px; }
.tool.off, .mini { color: #bebbb8; }
.chev {
  display: inline-block;
  width: 4px;
  height: 4px;
  margin: 0 1px 2px 3px;
  border: solid currentColor;
  border-width: 0 1px 1px 0;
  transform: rotate(45deg);
}
.group-name {
  margin-top: 6px;
  font-size: 10px;
  line-height: 12px;
  text-align: center;
}
.g-clipboard .tools { justify-content: flex-start; padding-left: 5px; }
.g-clipboard .group-name { padding-right: 6px; }
.clip-list { display: flex; flex-direction: column; padding-left: 1px; }
.mini {
  display: flex;
  align-items: center;
  gap: 5px;
  height: 24px;
  border: 0;
  padding: 0;
  background: none;
}
.collapse { margin: auto 5px 6px auto; }

/* main area */
main { flex: 1; display: flex; }
.views {
  flex: 0 0 36px;
  display: flex;
  flex-direction: column;
  align-items: center;
  gap: 23px;
  padding: 12px 4px 0 0;
  border-right: 1px solid #dddbd9;
}
.nav-text { font-size: 7px; font-weight: 600; fill: #797775; stroke: none; }

.workspace { flex: 1; display: flex; flex-direction: column; min-width: 0; }
.work-top { flex: 1; display: flex; }
.canvas {
  flex: 1;
  min-width: 0;
  padding: 0 20px 6px 19px;
  background: #cbcbcb;
}
.page {
  border: dotted #6f5343;
  border-width: 0 2px 2px;
}
.row { display: grid; }
.row-top { grid-template-columns: 219fr 286fr 370fr; gap: 8px; }
.row-bottom { grid-template-columns: 438fr 436fr; gap: 17px; margin-top: 33px; }
.tile { background: #fff; min-width: 0; }
.tile svg { width: 100%; height: auto; }
.tile h3 {
  padding-left: 3px;
  font-family: Roboto, sans-serif;
  font-size: 11px;
  font-weight: 700;
  line-height: 14px;
}
.chart h3 { line-height: 15px; }
.map { padding: 0 3px 3px 4px; }
.map h3 { padding-left: 1px; line-height: 13px; padding-bottom: 3px; }

.cards { display: grid; grid-template-rows: 130fr 114fr; gap: 13px; }
.card {
  display: flex;
  flex-direction: column;
  align-items: center;
  justify-content: flex-end;
  padding-bottom: 22px;
}
.card-first { padding-bottom: 29px; }
.card strong {
  font-family: Roboto, sans-serif;
  font-size: 36px;
  font-weight: 400;
  line-height: 42px;
}
.card span { font-weight: 600; line-height: 16px; color: #000; }

/* charts */
.label { font-size: 8px; font-weight: 700; fill: #252423; }
.legend { font-size: 9px; font-weight: 600; fill: #000; }
.leader { fill: none; stroke: #b3b0ad; }
.gridline { stroke: #dcdcdc; stroke-dasharray: 1 3; }
.series { fill: none; stroke: #30628c; stroke-width: 2; stroke-linejoin: round; }
.bar { fill: #101858; }
.land-names { font-size: 25px; font-weight: 600; fill: #fff; }
.ocean-names { font-size: 25px; fill: #a3bede; }
.credits { font-size: 18px; fill: #e6e6e6; }
.credits a { fill: #8fb8e8; text-decoration: underline; }
.bubble { fill: #2f6ba3; fill-opacity: .6; stroke: #174a78; stroke-width: 3; }

/* filters strip */
.filters {
  flex: 0 0 33px;
  display: flex;
  flex-direction: column;
  align-items: center;
  padding-top: 13px;
  background: #fff;
  border-left: 1px solid #b5b3b1;
}
.filters > svg { margin-top: 15px; }
.filters h2 { margin-top: 7px; writing-mode: vertical-rl; font-size: 14px; font-weight: 600; line-height: 16px; }

/* page tabs */
.page-tabs { display: flex; align-items: stretch; height: 35px; padding-left: 10px; }
.device {
  display: flex;
  align-items: center;
  justify-content: center;
  width: 24px;
  margin-bottom: 3px;
  padding-bottom: 3px;
}
.device.on { border-bottom: 3px solid #117865; }
.device + .device { margin-left: 20px; margin-right: 16px; }
.arrow { width: 6px; margin-right: 17px; }
.arrow + .arrow { margin-right: 5px; }
.page-tab {
  width: 75px;
  border: 0;
  border-left: 1px solid #8a8886;
  border-bottom: 4px solid #117865;
  padding: 6px 0 0;
  background: #fff;
}
.add-page {
  display: flex;
  align-items: center;
  justify-content: center;
  width: 39px;
  border: 0;
  background: #117865;
}

/* side panes */
.pane { border-left: 1px solid #dddbd9; }
.pane header {
  display: flex;
  align-items: center;
  justify-content: space-between;
  height: 38px;
  padding: 0 8px;
}
.pane h2 { font-size: 15px; font-weight: 600; line-height: 20px; }
.viz { flex: 0 0 181px; }
.build { padding-left: 8px; line-height: 16px; }
.modes { display: flex; gap: 35px; padding: 3px 8px 5px; }
.mode {
  display: flex;
  align-items: center;
  justify-content: center;
  width: 32px;
  height: 32px;
  border: 0;
  border-radius: 2px;
  padding: 0;
  background: none;
}
.mode.on { background: #c8c6c4; }
.visual-grid {
  display: grid;
  grid-template-columns: repeat(6, 18px);
  gap: 10px;
  padding: 12px 11px 0;
}
.visual-grid svg { width: 18px; height: 18px; overflow: visible; }
.ax { fill: none; stroke: #333; stroke-width: 3; }
.wh { fill: #fff; stroke: #333; stroke-width: 3; }
.bl { fill: #83bbec; stroke: #0f6cbd; stroke-width: 3; }
.gr { fill: #c8c6c4; stroke: #777; stroke-width: 3; }
.bolt { fill: #ffc36b; stroke: #c8690f; stroke-width: 3; }
.num { font-size: 26px; fill: #0f6cbd; text-anchor: middle; }
.lang { font-size: 45px; font-weight: 700; fill: #1f7fc8; text-anchor: middle; }
.more { margin: 7px 0 0 12px; font-size: 18px; line-height: 16px; }

.wells { margin-top: 15px; padding: 9px 6px 0 4px; border-top: 1px solid #dddbd9; }
.wells p { padding-left: 8px; line-height: 16px; }
.well {
  margin-top: 5px;
  padding-left: 10px;
  border: 1px dashed #bebbb8;
  border-radius: 2px;
  background: #fff;
  line-height: 28px;
}
.wells .drill { margin-top: 10px; font-weight: 600; color: #555; }
.well-low { padding-left: 8px; line-height: 24px; }
.opt {
  display: flex;
  align-items: center;
  justify-content: space-between;
  height: 28px;
  padding: 0 16px 0 8px;
}
.drill + .opt { margin-top: 2px; }
.switch {
  display: flex;
  align-items: center;
  justify-content: space-between;
  width: 32px;
  height: 16px;
  padding: 0 3px;
  border: 1px solid #797775;
  border-radius: 8px;
  background: #fff;
  color: #605e5c;
  font-size: 10px;
}
.switch input {
  appearance: none;
  width: 8px;
  height: 8px;
  margin: 0;
  border-radius: 50%;
  background: #605e5c;
}
.switch.on { background: #117865; border-color: #117865; color: #fff; }
.switch.on input { background: #fff; }

.data { flex: 0 0 182px; }
.data-search {
  display: flex;
  align-items: center;
  gap: 6px;
  height: 25px;
  margin: 7px 4px 0;
  padding-left: 12px;
  border: 1px solid #d1d1d1;
  border-bottom-color: #616161;
  border-radius: 4px;
  background: #fff;
}
.data-search input { width: 100%; border: 0; padding: 0; background: none; font-size: 13px; }
.data-search input::placeholder { color: #707070; opacity: 1; }
.table-row { display: flex; align-items: center; gap: 6px; padding: 14px 0 0 15px; line-height: 16px; }

/* status bar */
.status {
  display: flex;
  align-items: center;
  justify-content: space-between;
  height: 25px;
  padding-right: 18px;
  border-top: 1px solid #dddbd9;
  color: #484644;
}
.zoom { display: flex; align-items: center; gap: 6px; color: #605e5c; }
.zoom .plain { font-size: 13px; }
.zoom span { margin-left: 7px; }
.fit { margin-left: 13px; }
.zoom input {
  appearance: none;
  width: 101px;
  height: 12px;
  margin: 0;
  background: linear-gradient(#605e5c, #605e5c) center / 100% 1px no-repeat,
    linear-gradient(#605e5c, #605e5c) center / 1px 5px no-repeat;
}
.zoom input::-webkit-slider-thumb { appearance: none; width: 4px; height: 12px; background: #605e5c; }

/* taskbar */
.taskbar { display: flex; height: 41px; background: #000; color: #fff; }
.task-left { flex: 0 0 40%; display: flex; align-items: center; padding-left: 10px; gap: 29px; }
.control-panel { display: flex; align-items: center; gap: 4px; margin-left: -13px; padding-bottom: 10px; }
.task-apps { display: flex; }
.app {
  display: flex;
  align-items: center;
  justify-content: center;
  width: 49px;
  border: 0;
  padding: 2px 0 0;
  background: linear-gradient(#8fa3c8, #8fa3c8) center bottom / 0 3px no-repeat;
}
.app.open { background-size: 41px 3px; }
.app.current { background-size: 100% 3px; background-color: #333; }
.tray {
  display: flex;
  align-items: center;
  gap: 9px;
  margin-left: auto;
  margin-right: 4px;
  padding-right: 20px;
  border-right: 1px solid #444;
}
.lang-switch { width: 24px; text-align: center; font-family: 'DejaVu Sans', sans-serif; font-size: 13px; }
.clock { width: 64px; line-height: 18px; text-align: center; }

.watermark {
  position: absolute;
  left: 44%;
  bottom: 16px;
  width: 165px;
  text-align: center;
  color: #8c8c8c;
  opacity: .45;
  pointer-events: none;
}
.watermark span {
  display: block;
  font-family: 'DejaVu Sans', sans-serif;
  font-size: 44px;
  font-weight: 700;
  line-height: 48px;
  opacity: .5;
}
.watermark b { display: block; font-family: Lato, sans-serif; font-size: 28px; line-height: 28px; }
```

FILE: charts.js
```js
const NS = "http://www.w3.org/2000/svg";

function add(parent, tag, attrs, text) {
  const el = document.createElementNS(NS, tag);
  for (const key in attrs) el.setAttribute(key, attrs[key]);
  if (text !== undefined) el.textContent = text;
  parent.appendChild(el);
  return el;
}

// ---- donut ----
const industries = [
  { name: "Consumer", value: 324, color: "#6b7b7c" },
  { name: "Education", value: 247, color: "#362828" },
  { name: "Food", value: 370, color: "#b08d72" },
  { name: "Healthcare", value: 540, color: "#404849" },
  { name: "Other", value: 392, color: "#85979b" },
  { name: "Retail", value: 457, color: "#5a3c32" },
  { name: "Transportation", value: 340, color: "#918e8d" }
];
const donutLabels = [
  [127, 60, "start", "324K (12.12%)"],
  [166, 79, "start", "247K"], [166, 90, "start", "(9.24%)"],
  [174, 146, "start", "370K"], [174, 157, "start", "(13.8...)"],
  [89, 191, "end", "540K (20.23%)"],
  [44, 164, "end", "392K"], [44, 177, "end", "(14.7%)"],
  [34, 88, "end", "457K"], [34, 99, "end", "(17.1...)"],
  [78, 60, "end", "340K (12.73%)"]
];
const leaders = [
  "M113 66l2-6h9", "M150 86l4-4h9", "M157 148l5 2h10",
  "M101 184v7h-9", "M59 166l-5 4h-8", "M50 97l-6-3h-8", "M90 66l-2-6h-8"
];

function drawDonut() {
  const svg = document.getElementById("donut");
  const cx = 102, cy = 121, R = 58, r = 35;
  const total = industries.reduce((sum, d) => sum + d.value, 0);
  const pt = (a, rad) => `${cx + rad * Math.sin(a)} ${cy - rad * Math.cos(a)}`;
  let a0 = 0;
  industries.forEach((d, i) => {
    const a1 = a0 + d.value / total * 2 * Math.PI;
    add(svg, "path", {
      d: `M${pt(a0, R)}A${R} ${R} 0 0 1 ${pt(a1, R)}L${pt(a1, r)}A${r} ${r} 0 0 0 ${pt(a0, r)}z`,
      fill: d.color
    });
    a0 = a1;
    const y = 68 + i * 18;
    add(svg, "circle", { cx: 206, cy: y, r: 4, fill: d.color });
    add(svg, "text", { x: 211, y: y + 3, class: "legend" }, d.name);
  });
  leaders.forEach(d => add(svg, "path", { d, class: "leader" }));
  donutLabels.forEach(([x, y, anchor, text]) =>
    add(svg, "text", { x, y, "text-anchor": anchor, class: "label" }, text));
}

// ---- line ----
const months = ["March", "May", "November", "October", "September"];
const percentages = [4.6, 23, 7.9, 17.3, 21.5, 14.6, 48.2, 24.2, 7.6, 25.5, 23.5, 17.3, 22.9, 18.6, 10];

function drawLine() {
  const svg = document.getElementById("line");
  const px = i => 31 + i * 28;
  const py = v => 165 - v * 3.15;
  [0, 20, 40].forEach(v => {
    add(svg, "line", { x1: 19, x2: 433, y1: py(v), y2: py(v), class: "gridline" });
    add(svg, "text", { x: 13, y: py(v) + 3, "text-anchor": "end", class: "label" }, v);
  });
  add(svg, "polyline", { points: percentages.map((v, i) => `${px(i)},${py(v)}`).join(" "), class: "series" });
  percentages.forEach((v, i) =>
    add(svg, "text", { x: px(i), y: 176, "text-anchor": "middle", class: "label" }, 2022 + i % 3));
  months.forEach((m, i) => {
    add(svg, "text", { x: px(i * 3 + 1), y: 188, "text-anchor": "middle", class: "label" }, m);
    add(svg, "line", { x1: px(i * 3) - 14, x2: px(i * 3) - 14, y1: 167, y2: 193, class: "gridline" });
  });
}

// ---- bars ----
const layoffs = [
  ["Retail", 97.8], ["Consumer", 86.9], ["Other", 81], ["Transportation", 69.6], ["Food", 51.1],
  ["Healthcare", 45.2], ["Education", 36.3], ["Data", 33.6], ["Hardware", 29.6], ["Crypto", 25.9],
  ["Real Estate", 24.4], ["Infrastructure", 23.2], ["Sales", 17], ["Security", 13.8],
  ["Product", 13.8], ["Marketing", 12.3], ["Logistics", 12.3], ["HR", 12.3]
];

function drawBars() {
  const svg = document.getElementById("bars");
  const py = v => 143 - v * 1.35;
  [0, 50, 100].forEach(v => {
    add(svg, "line", { x1: 30, x2: 432, y1: py(v), y2: py(v), class: "gridline" });
    add(svg, "text", { x: 24, y: py(v) + 3, "text-anchor": "end", class: "label" }, v + "K");
  });
  layoffs.forEach(([name, v], i) => {
    const x = 39 + i * 21.7;
    add(svg, "rect", { x, y: py(v), width: 17.5, height: v * 1.35, class: "bar" });
    add(svg, "text", {
      transform: `translate(${x + 6} 152) rotate(-34)`, "text-anchor": "end", class: "label"
    }, name);
  });
}

// ---- map bubbles: x, y, radius ----
const cities = [
  [221, 331, 34], [203, 353, 14], [216, 375, 15], [238, 345, 17], [216, 318, 9], [228, 320, 10],
  [205, 369, 15], [252, 352, 10], [270, 348, 16], [250, 370, 15], [275, 355, 10], [302, 340, 16],
  [318, 350, 17], [345, 325, 22], [325, 335, 14], [350, 350, 20], [330, 368, 26], [344, 348, 10],
  [300, 352, 14], [276, 382, 18], [292, 385, 15], [251, 392, 18], [262, 405, 16], [270, 418, 12],
  [259, 415, 14], [276, 370, 14], [322, 394, 15], [322, 365, 16], [306, 432, 15], [342, 425, 21],
  [385, 427, 15], [349, 462, 20], [341, 470, 13], [341, 513, 9], [387, 575, 19], [356, 587, 17],
  [400, 591, 10], [572, 295, 47], [599, 232, 23], [623, 258, 24], [604, 252, 14], [602, 268, 13],
  [592, 320, 40], [641, 256, 13], [555, 280, 14], [560, 300, 12], [575, 300, 14], [600, 290, 16],
  [630, 297, 14], [612, 310, 16], [593, 320, 10], [575, 338, 15], [541, 356, 16], [545, 350, 12],
  [625, 320, 14], [640, 320, 16], [655, 345, 16], [648, 332, 12], [665, 365, 17], [659, 381, 17],
  [671, 375, 14], [617, 333, 14], [550, 290, 10], [680, 280, 21], [640, 280, 16], [516, 434, 20],
  [732, 401, 16], [783, 371, 31], [797, 388, 18], [795, 408, 18], [822, 400, 17], [790, 425, 18],
  [803, 438, 18], [797, 452, 12], [787, 417, 10], [847, 418, 14], [866, 437, 12], [884, 446, 14],
  [869, 468, 14], [885, 495, 20], [885, 405, 12], [905, 410, 10], [911, 350, 16], [927, 380, 22],
  [943, 357, 18], [982, 365, 14], [677, 484, 31], [732, 492, 15], [1022, 565, 18], [1002, 605, 32],
  [1016, 588, 19], [982, 592, 11], [1086, 598, 38]
];

function drawBubbles() {
  const g = document.getElementById("bubbles");
  cities.forEach(([cx, cy, r]) => add(g, "circle", { cx, cy, r, class: "bubble" }));
}

drawDonut();
drawLine();
drawBars();
drawBubbles();
```
